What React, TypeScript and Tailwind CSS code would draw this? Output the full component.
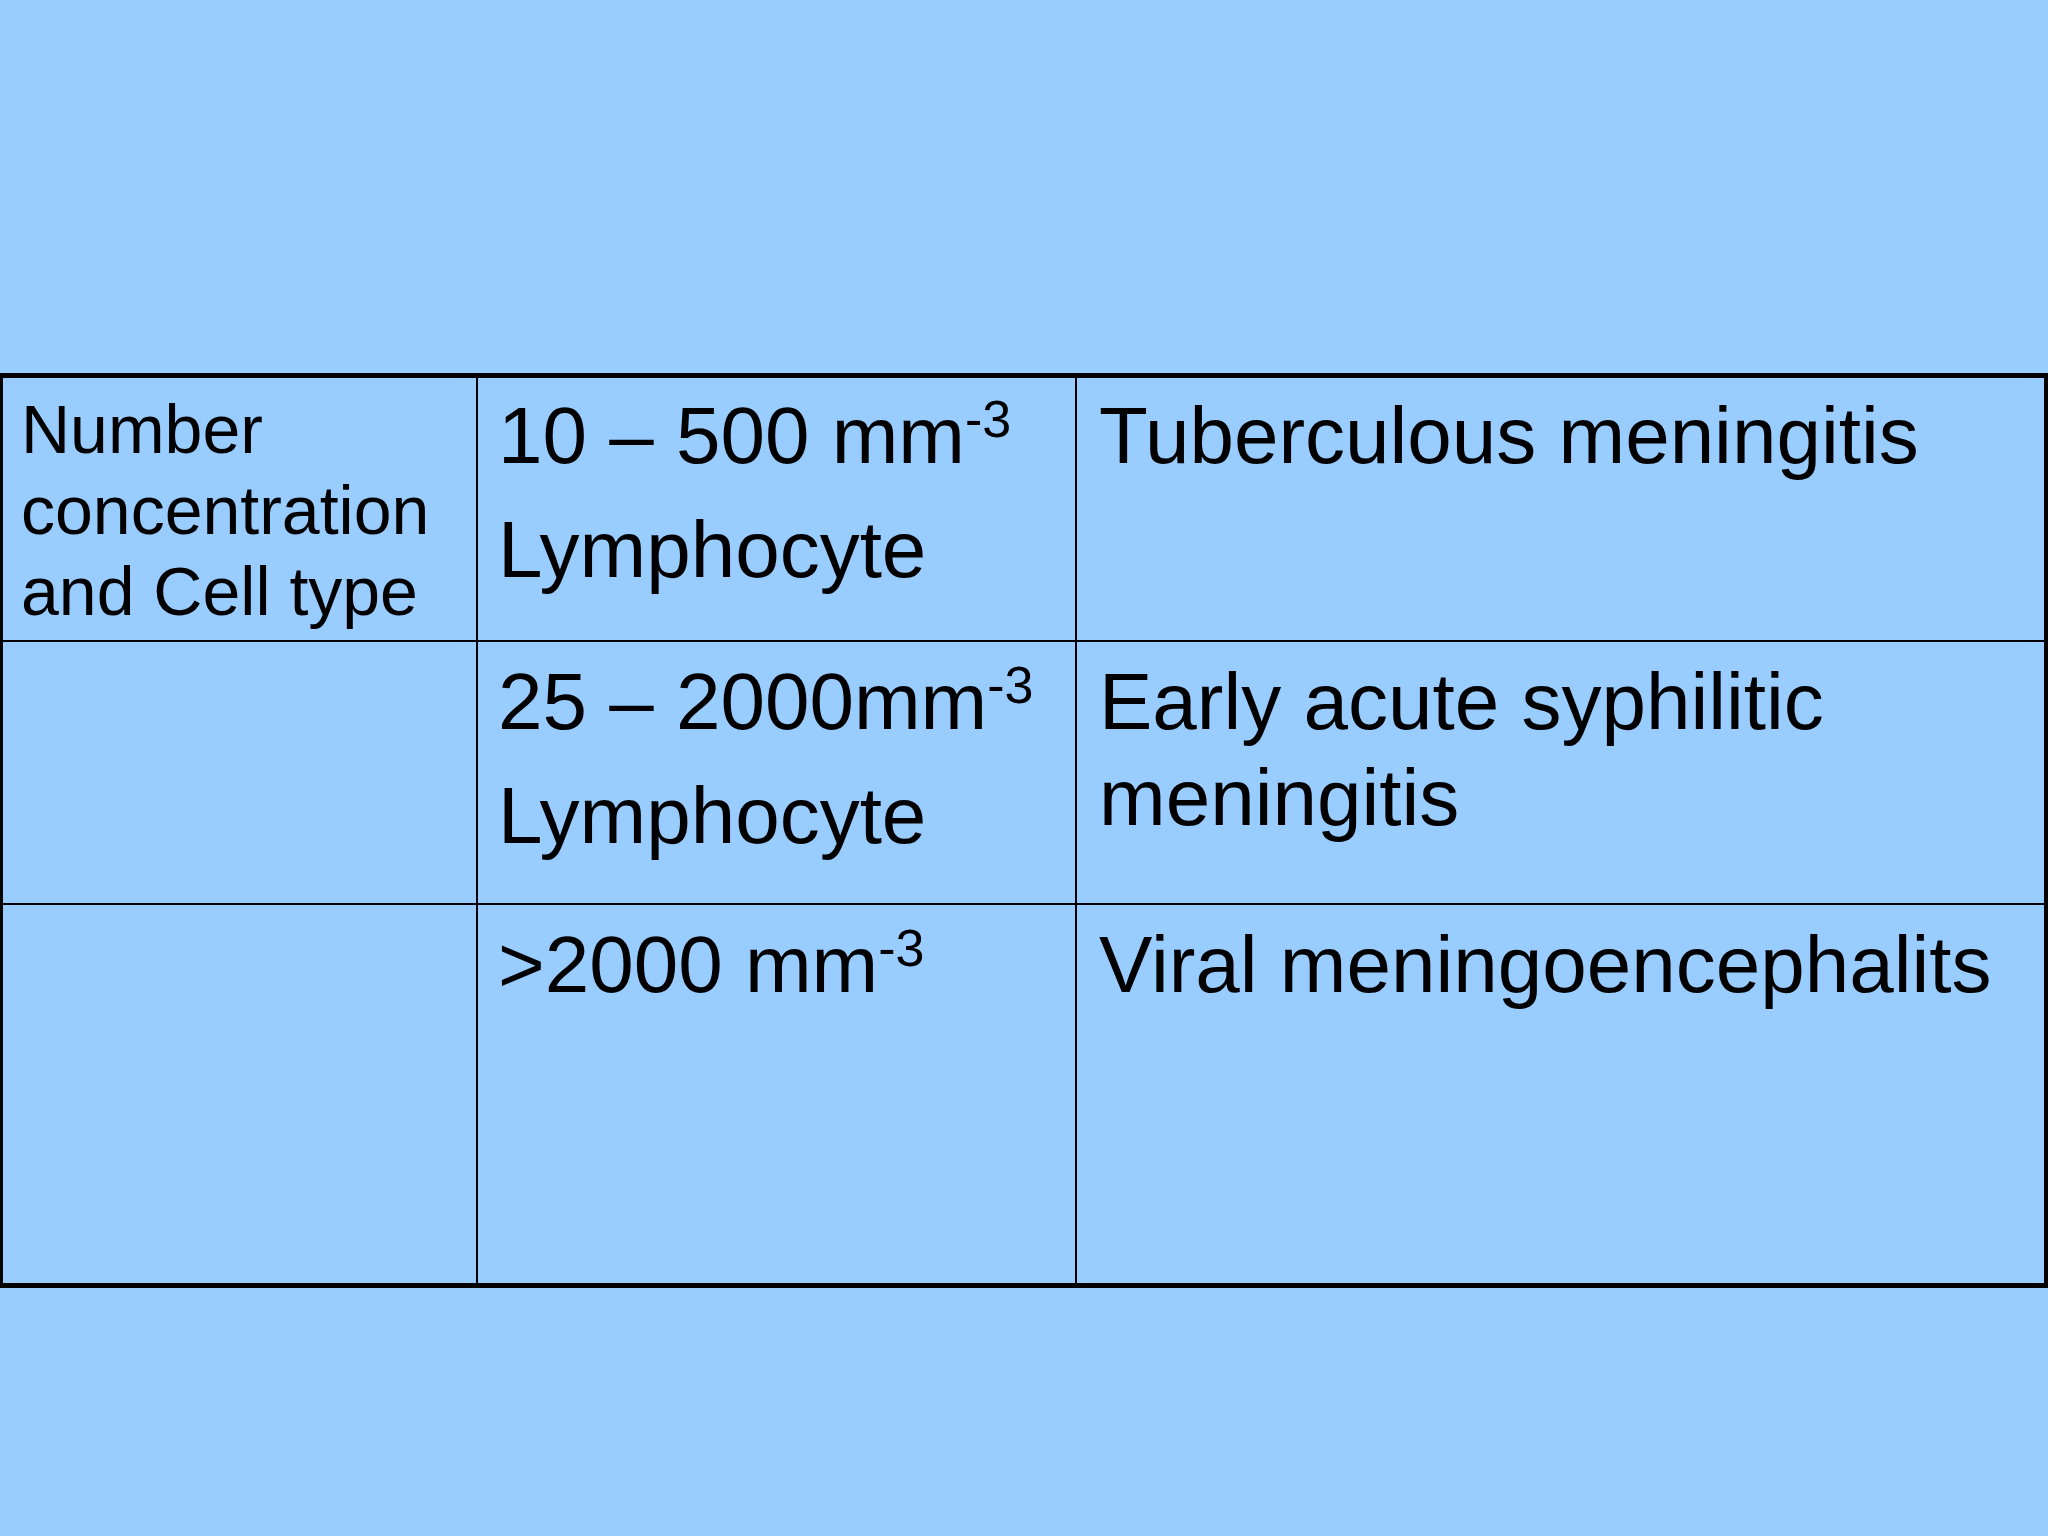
const rows = [
  {
    label: "Number concentration and Cell type",
    count: "10 – 500 mm",
    cell: "Lymphocyte",
    diagnosis: "Tuberculous meningitis",
    height: "h-[264px]",
    pad: "pt-[10px]",
  },
  {
    label: "",
    count: "25 – 2000mm",
    cell: "Lymphocyte",
    diagnosis: "Early acute syphilitic meningitis",
    height: "h-[263px]",
    pad: "pt-[12px]",
  },
  {
    label: "",
    count: ">2000 mm",
    cell: "",
    diagnosis: "Viral meningoencephalits",
    height: "h-[378px]",
    pad: "pt-[12px]",
  },
];

const App = () => {
  return (
    <div className="w-[2048px] h-[1536px] bg-[#99ccff] pt-[373px] font-['Liberation_Sans',Arial,sans-serif] text-black overflow-hidden">
      <div className="w-full border-t-[5px] border-b-[5px] border-l-[3px] border-r-[4px] border-black">
        {rows.map((row, index) => (
          <div
            className={`grid grid-cols-[473px_2px_597px_2px_967px] ${row.height} ${
              index < rows.length - 1 ? "border-b-2 border-black" : ""
            }`}
            key={index}
          >
            <div className={`pl-[18px] pr-2 ${index === 0 ? "pt-[11px]" : row.pad} text-[68px] leading-[81px]`}>
              {row.label}
            </div>
            <div className="bg-black" />
            <div className={`pl-[20px] pr-2 ${row.pad} text-[80px] leading-[96px]`}>
              <p className="whitespace-nowrap">
                {row.count}
                <sup className="text-[52px]">-3</sup>
              </p>
              {row.cell && <p className="mt-[18px]">{row.cell}</p>}
            </div>
            <div className="bg-black" />
            <div className={`pl-[22px] pr-4 ${row.pad} text-[80px] leading-[96px]`}>
              {row.diagnosis}
            </div>
          </div>
        ))}
      </div>
    </div>
  );
};

export default App;
